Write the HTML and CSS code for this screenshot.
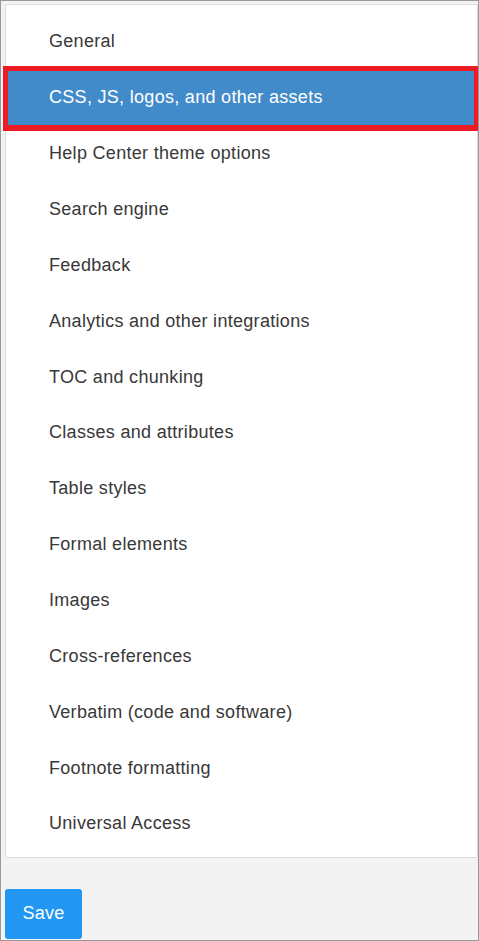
FILE: index.html
```html
<!DOCTYPE html>
<html lang="en">
<head>
<meta charset="utf-8">
<title>Settings</title>
<link rel="stylesheet" href="styles.css">
</head>
<body>
<div class="frame">
  <ul class="menu">
    <li class="item">General</li>
    <li class="item selected">CSS, JS, logos, and other assets<span class="highlight"></span></li>
    <li class="item">Help Center theme options</li>
    <li class="item">Search engine</li>
    <li class="item">Feedback</li>
    <li class="item">Analytics and other integrations</li>
    <li class="item">TOC and chunking</li>
    <li class="item">Classes and attributes</li>
    <li class="item">Table styles</li>
    <li class="item">Formal elements</li>
    <li class="item">Images</li>
    <li class="item">Cross-references</li>
    <li class="item">Verbatim (code and software)</li>
    <li class="item">Footnote formatting</li>
    <li class="item">Universal Access</li>
  </ul>
  <button class="save" type="button">Save</button>
</div>
</body>
</html>
```

FILE: styles.css
```css
* { box-sizing: border-box; }
html, body {
  margin: 0;
  padding: 0;
  background: #f4f3f4;
}
body {
  font-family: "Liberation Sans", Helvetica, Arial, sans-serif;
  width: 479px;
  height: 941px;
  overflow: hidden;
}
.frame {
  width: 479px;
  height: 941px;
  border: 1px solid #999;
  padding: 3px 0 0 4px;
  display: flex;
  flex-direction: column;
  align-items: flex-start;
}
.menu {
  list-style: none;
  margin: 0;
  padding: 9px 0 5px;
  width: 473px;
  background: #fff;
  border: 1px solid #dcdcdc;
  border-radius: 0 0 0 3px;
}
.item {
  position: relative;
  height: 55.86px;
  display: flex;
  align-items: center;
  padding-left: 43px;
  font-size: 18px;
  letter-spacing: 0.3px;
  color: #383838;
}
.item.selected {
  background: #428bca;
  color: #fff;
}
.highlight {
  position: absolute;
  left: -3px;
  right: -1px;
  top: -4px;
  bottom: -5px;
  border-style: solid;
  border-color: #ed1c24;
  border-width: 5px 4px 6px 5px;
  pointer-events: none;
}
.save {
  margin-top: 31px;
  width: 77px;
  height: 50px;
  border: none;
  border-radius: 3px;
  background: #2196f3;
  color: #fff;
  font-family: "Liberation Sans", Helvetica, Arial, sans-serif;
  font-size: 18px;
  letter-spacing: 0.2px;
  padding: 0;
}
```
